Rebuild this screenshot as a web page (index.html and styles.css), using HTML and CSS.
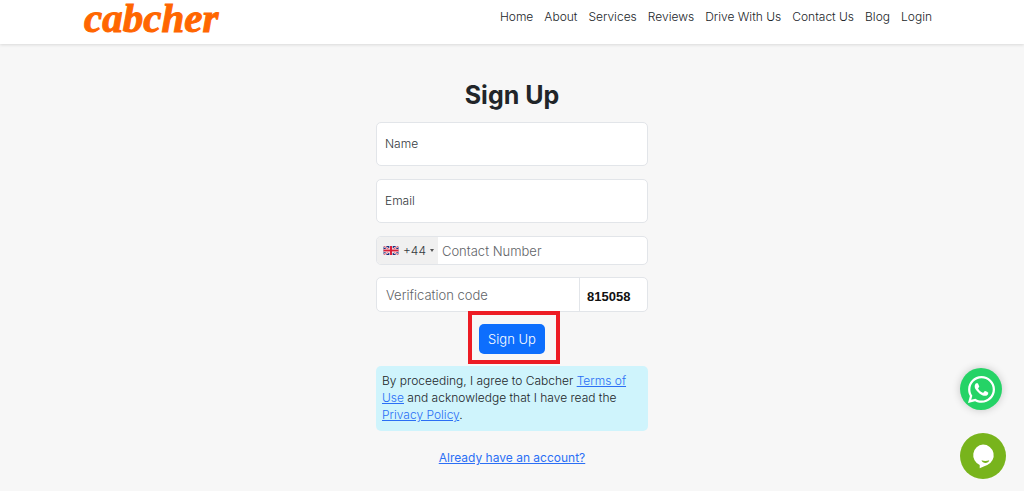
FILE: index.html
```html
<!DOCTYPE html>
<html lang="en">
<head>
  <meta charset="UTF-8">
  <meta name="viewport" content="width=device-width, initial-scale=1.0">
  <title>Sign Up - Cabcher</title>
  <link rel="stylesheet" href="styles.css">
</head>
<body>

  <header class="header">
    <div class="container">
      <a class="logo" href="#">cabcher</a>
      <nav class="nav">
        <a href="#">Home</a>
        <a href="#">About</a>
        <a href="#">Services</a>
        <a href="#">Reviews</a>
        <a href="#">Drive With Us</a>
        <a href="#">Contact Us</a>
        <a href="#">Blog</a>
        <a href="#">Login</a>
      </nav>
    </div>
  </header>

  <main class="signup">
    <h1>Sign Up</h1>
    <form class="signup-form" id="signupForm">
      <div class="form-floating">
        <input type="text" id="name" name="name" placeholder=" ">
        <label for="name">Name</label>
      </div>

      <div class="form-floating">
        <input type="email" id="email" name="email" placeholder=" ">
        <label for="email">Email</label>
      </div>

      <div class="input-group phone">
        <button type="button" class="country" aria-label="Country code +44">
          <svg class="flag" viewBox="0 0 60 36" aria-hidden="true">
            <rect width="60" height="36" fill="#1b2f7d"/>
            <path d="M0 0l60 36M60 0L0 36" stroke="#fff" stroke-width="8"/>
            <path d="M0 0l60 36M60 0L0 36" stroke="#d8203a" stroke-width="3"/>
            <path d="M30 0v36M0 18h60" stroke="#fff" stroke-width="13"/>
            <path d="M30 0v36M0 18h60" stroke="#d8203a" stroke-width="8"/>
          </svg>
          <span>+44</span>
          <span class="caret"></span>
        </button>
        <input type="tel" name="phone" placeholder="Contact Number" aria-label="Contact Number">
      </div>

      <div class="input-group verify">
        <input type="text" name="code" placeholder="Verification code" aria-label="Verification code">
        <span class="captcha">815058</span>
      </div>

      <div class="submit-row">
        <button type="submit" class="btn">Sign Up</button>
      </div>

      <p class="alert">By proceeding, I agree to Cabcher <a href="#">Terms of Use</a> and acknowledge that I have read the <a href="#">Privacy Policy</a>.</p>
    </form>
    <a class="have-account" href="#">Already have an account?</a>
  </main>

  <div class="floating">
    <a class="whatsapp" href="#" aria-label="WhatsApp">
      <svg viewBox="0 0 448 512" aria-hidden="true">
        <path fill="#fff" d="M380.9 97.1C339 55.1 283.2 32 223.9 32c-122.4 0-222 99.6-222 222 0 39.1 10.2 77.3 29.6 111L0 480l117.7-30.9c32.4 17.7 68.9 27 106.1 27h.1c122.3 0 224.1-99.6 224.1-222 0-59.3-25.2-115-67.1-157zm-157 341.6c-33.2 0-65.7-8.9-94-25.7l-6.7-4-69.8 18.3L72 359.2l-4.4-7c-18.5-29.4-28.2-63.3-28.2-98.2 0-101.7 82.8-184.5 184.6-184.5 49.3 0 95.6 19.2 130.4 54.1 34.8 34.9 56.2 81.2 56.1 130.5 0 101.8-84.9 184.6-186.6 184.6zm101.2-138.2c-5.5-2.8-32.8-16.2-37.9-18-5.1-1.9-8.8-2.8-12.5 2.8-3.7 5.6-14.3 18-17.6 21.8-3.2 3.7-6.5 4.2-12 1.4-32.6-16.3-54-29.1-75.5-66-5.7-9.8 5.7-9.1 16.3-30.3 1.8-3.7.9-6.9-.5-9.7-1.4-2.8-12.5-30.1-17.1-41.2-4.5-10.8-9.1-9.3-12.5-9.5-3.2-.2-6.9-.2-10.6-.2-3.7 0-9.7 1.4-14.8 6.9-5.1 5.6-19.4 19-19.4 46.3 0 27.3 19.9 53.7 22.6 57.4 2.8 3.7 39.1 59.7 94.8 83.8 35.2 15.2 49 16.5 66.6 13.9 10.7-1.6 32.8-13.4 37.4-26.4 4.6-13 4.6-24.1 3.2-26.4-1.3-2.5-5-3.9-10.5-6.6z"/>
      </svg>
    </a>
    <button type="button" class="chat" aria-label="Open chat">
      <svg viewBox="0 0 46 46" aria-hidden="true">
        <path fill="#fff" d="M23 11.500a10.700 10.700 0 0 1 4.300 20.500C25 33 22.500 34 19.700 35.200v-3.200A10.700 10.700 0 0 1 23 11.500z"/>
        <path fill="#78b41c" d="M21.500 27.300c2.600 1 5.200.9 7.800 0-.8 3.400-6.700 3.600-7.800 0z"/>
      </svg>
    </button>
  </div>

</body>
</html>
```
FILE: styles.css
```css
* {
  box-sizing: border-box;
}
body {
  margin: 0;
  background: #f7f7f7;
  color: #212529;
  font-family: Inter, "Liberation Sans", sans-serif;
  font-size: 12px;
  font-weight: 300;
  line-height: 17px;
}
input, button {
  font-family: inherit;
  font-size: 13px;
  font-weight: 300;
  color: inherit;
}
a {
  color: #2b6ff5;
}

/* header */
.header {
  background: #fff;
  box-shadow: 0 1px 3px rgba(0, 0, 0, 0.12);
}
.container {
  display: flex;
  justify-content: space-between;
  align-items: flex-start;
  max-width: 856px;
  height: 44px;
  margin: 0 auto;
}
.logo {
  color: #ff6600;
  font: italic bold 41px/36px "Liberation Serif", serif;
  -webkit-text-stroke: 1px #ff6600;
  text-decoration: none;
}
.nav {
  display: flex;
  gap: 11px;
  padding: 8px 8px 0 0;
}
.nav a {
  color: #212529;
  text-decoration: none;
}

/* sign up form */
.signup {
  width: 100%;
  max-width: 272px;
  margin: 0 auto;
  padding: 36px 0 24px;
  text-align: center;
}
h1 {
  margin: 0 0 12px;
  font-size: 25px;
  font-weight: 700;
  line-height: 30px;
}
.form-floating {
  position: relative;
  margin-bottom: 13px;
}
.form-floating input {
  display: block;
  width: 100%;
  height: 44px;
  padding: 14px 9px 0;
  border: 1px solid #e2e5e9;
  border-radius: 5px;
  background: #fff;
}
.form-floating label {
  position: absolute;
  top: 13px;
  left: 9px;
  color: #343a40;
  pointer-events: none;
}
.form-floating input:focus + label,
.form-floating input:not(:placeholder-shown) + label {
  top: 2px;
  font-size: 10px;
}
.input-group {
  display: flex;
  margin-bottom: 12px;
  border: 1px solid #e2e5e9;
  border-radius: 5px;
  background: #fff;
  overflow: hidden;
}
.input-group input {
  flex: 1;
  min-width: 0;
  border: 0;
  background: none;
}
.input-group input::placeholder {
  color: #5f6468;
}
.phone {
  height: 29px;
}
.phone input {
  padding: 0 4px;
}
.country {
  display: flex;
  align-items: center;
  gap: 4px;
  padding: 0 4px 0 6px;
  border: 0;
  background: #f0f0f0;
  color: #343a40;
  font-size: 12px;
}
.flag {
  width: 16px;
  height: 9px;
}
.caret {
  border: 2px solid transparent;
  border-top: 3px solid #555;
  border-bottom: 0;
}
.verify {
  height: 35px;
}
.verify input {
  padding: 0 9px;
}
.captcha {
  width: 68px;
  padding: 10px 0 0 7px;
  border-left: 1px solid #e2e5e9;
  color: #111;
  font: bold 13px/17px "Liberation Sans", sans-serif;
  text-align: left;
}
.submit-row {
  position: relative;
  width: 66px;
  margin: 0 auto 12px;
}
/* red frame round the button */
.submit-row::after {
  content: "";
  position: absolute;
  inset: -13px -15px -10px -11px;
  border: 4px solid #ed1c24;
  pointer-events: none;
}
.btn {
  display: block;
  width: 100%;
  height: 30px;
  padding: 0;
  border: 0;
  border-radius: 5px;
  background: #0d6efd;
  color: #fff;
  cursor: pointer;
}
.alert {
  margin: 0 0 18px;
  padding: 6px 6px 8px;
  border-radius: 5px;
  background: #cff4fc;
  color: #212529;
  text-align: left;
}
.have-account {
  font-weight: 400;
}

/* contact buttons */
.floating {
  position: fixed;
  right: 18px;
  bottom: 12px;
  display: flex;
  flex-direction: column;
  align-items: flex-start;
  gap: 23px;
}
.whatsapp {
  display: flex;
  align-items: center;
  justify-content: center;
  width: 42px;
  height: 42px;
  border-radius: 50%;
  background: #25d366;
  box-shadow: 0 0 8px rgba(0, 0, 0, 0.2);
}
.whatsapp svg {
  width: 27px;
  height: 31px;
}
.chat {
  width: 46px;
  height: 46px;
  padding: 0;
  border: 0;
  border-radius: 50%;
  background: #78b41c;
  cursor: pointer;
}
.chat svg {
  display: block;
}
```
